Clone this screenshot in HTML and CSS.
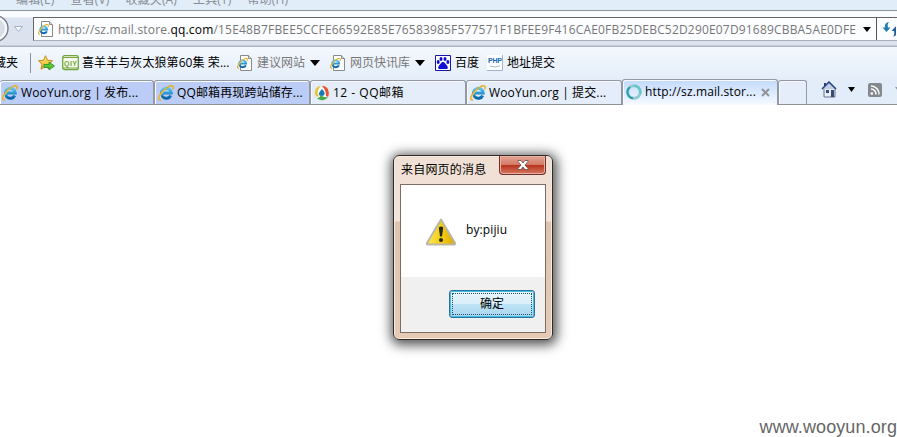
FILE: index.html
```html
<!DOCTYPE html>
<html lang="zh-CN">
<head>
<meta charset="utf-8">
<title>QQ邮箱</title>
<link rel="stylesheet" href="styles.css">
</head>
<body>
<svg class="defs" width="0" height="0" aria-hidden="true">
  <defs>
    <linearGradient id="blue" x2="0" y2="1"><stop stop-color="#54c6f4"/><stop offset="1" stop-color="#0863ad"/></linearGradient>
    <linearGradient id="gold" x2="0" y2="1"><stop stop-color="#fff27b"/><stop offset="1" stop-color="#e7aa16"/></linearGradient>
    <linearGradient id="warn" x2="1" y2="0"><stop stop-color="#ffe65a"/><stop offset=".5" stop-color="#f5cf12"/><stop offset="1" stop-color="#dda900"/></linearGradient>
    <symbol id="ie" viewBox="0 0 16 16">
      <path d="M12.8 10.5A5 5 0 1 1 13.3 8H5" fill="none" stroke="url(#blue)" stroke-width="2.9"/>
      <path d="M3 14.8C-.5 15.5.3 11 4.2 6.8 8.2 2.4 13-.3 14.7 1.2c.8.8.4 2.1-.2 3.2" fill="none" stroke="#e8ad22" stroke-width="1.5"/>
      <path d="M2.5 14C1 12.8 3 9 6.5 5.6" fill="none" stroke="#ffe36a" stroke-width=".7"/>
    </symbol>
    <symbol id="iepage" viewBox="0 0 16 16">
      <path d="M3.5.5h8l3 3v12h-11z" fill="#fff" stroke="#8a8a8a"/>
      <path d="M11.5.5v3h3" fill="#ddd" stroke="#8a8a8a"/>
      <use href="#ie" x="0" y="3" width="11" height="11"/>
    </symbol>
  </defs>
</svg>

<header class="chrome">
  <nav class="menu"><span>编辑(E)</span><span>查看(V)</span><span>收藏夹(A)</span><span>工具(T)</span><span>帮助(H)</span></nav>

  <div class="navrow">
    <svg class="back" width="33" height="28" viewBox="0 0 33 28">
      <circle cx="-5" cy="12.5" r="13" fill="#d8dee7" stroke="#737b87" stroke-width="1.3"/>
      <circle cx="-5" cy="12.5" r="11" fill="none" stroke="#f8fafc" stroke-width="2"/>
      <path d="M14.5 10.5h8l-4 5z" fill="#f5f7fc" stroke="#a9b1c4"/>
    </svg>
    <div class="address">
      <svg width="16" height="16"><use href="#iepage"/></svg>
      <span class="url">http://sz.mail.store.<b>qq.com</b>/15E48B7FBEE5CCFE66592E85E76583985F577571F1BFEE9F416CAE0FB25DEBC52D290E07D91689CBBA5AE0DFE</span>
      <svg class="drop" width="8" height="5"><path d="M0 0h8L4 5z"/></svg>
      <span class="refresh"><svg width="18" height="16" viewBox="0 0 18 16"><path d="M7 1C3.500 1.500 2.500 4 3 6.500H.5l4 4.500 4-4.500H6C5.500 4.500 5.500 2.500 7 1z" fill="#257fae"/><path d="M11 15.500c3.500-.5 4.500-3 4-5.500h2.500l-4-4.500-4 4.500H12c.5 2 .5 4-1 5.500z" fill="#275ba0"/></svg></span>
    </div>
  </div>

  <div class="favorites">
    <span class="label cut"><i>收藏夹</i></span>
    <span class="divider"></span>
    <svg class="star" width="17" height="16" viewBox="0 0 17 16"><path d="M7.500.7l2 4.600 5 .5-3.700 3.400 1.100 5-4.400-2.600-4.500 2.600L4 9.200.5 5.800l5-.5z" fill="url(#gold)" stroke="#c78b19"/><path d="M6 9.500h5V7l5.500 4-5.500 4v-2.500H6z" fill="#58c936" stroke="#238e27" stroke-width=".8"/></svg>
    <a class="fav qiyi"><svg width="17" height="16" viewBox="0 0 17 16"><rect x=".7" y=".7" width="15.600" height="14" rx="2" fill="#f5faec" stroke="#70a63b" stroke-width="1.300"/><path d="M1 2.500h15M1 13h15" stroke="#70a63b"/><text x="2" y="11" class="qiytext" textLength="13">QIY</text></svg><span>喜羊羊与灰太狼第60集 荣...</span></a>
    <a class="fav suggest muted"><svg width="16" height="16"><use href="#iepage"/></svg><span>建议网站</span><svg class="arrow" width="10" height="6"><path d="M0 0h10L5 6z"/></svg></a>
    <a class="fav feeds muted"><svg width="16" height="16"><use href="#iepage"/></svg><span>网页快讯库</span><svg class="arrow" width="10" height="6"><path d="M0 0h10L5 6z"/></svg></a>
    <a class="fav baidu"><svg width="16" height="16" viewBox="0 0 16 16"><path d="M.5.500h15v15H.5z" fill="#fff" stroke="#1717ae"/><g fill="#1010d2"><ellipse cx="3.200" cy="7" rx="1.500" ry="2"/><ellipse cx="6" cy="4" rx="1.500" ry="2"/><ellipse cx="10" cy="4" rx="1.500" ry="2"/><ellipse cx="12.900" cy="7" rx="1.500" ry="2"/><path d="M8 7c2 0 2 2 4 3.500 2 3 0 4-2 3.500H6c-2 .5-4-.5-2-3.500C6 9 6 7 8 7z"/></g></svg><span>百度</span></a>
    <a class="fav php"><svg width="16" height="16" viewBox="0 0 16 16"><path d="M0 0h16v16H0z" fill="#fff"/><path d="M15.500 0v15.500H0" fill="none" stroke="#9eb5d1"/><text x="1" y="7.500" class="phptext" textLength="14">PHP</text><path d="M3 11q5 2 10 0" fill="none" stroke="#a5bdd7"/></svg><span>地址提交</span></a>
  </div>

  <div class="tabs">
    <div class="tab blue first"><svg width="16" height="16"><use href="#ie"/></svg><span>WooYun.org | 发布...</span></div>
    <div class="tab blue second"><svg width="16" height="16"><use href="#ie"/></svg><span>QQ邮箱再现跨站储存...</span></div>
    <div class="tab third"><svg width="16" height="16" viewBox="0 0 16 16"><circle cx="8" cy="8" r="7.500" fill="#fff" stroke="#dce3e8"/><path d="M7 1C2 1-.5 7 2 11c1 1 2 1 3 0C2 8 4 4 7 1z" fill="#e8c331"/><path d="M8 1c5-1 8 5 6.500 10-.5 1-1.500 1-2.500 0 0-4-1-7-4-10z" fill="#e85331"/><path d="M3 13c3 3 8 3 11-1-4 1-6-1-7-2-1 2-2 3-4 3z" fill="#44ac42"/><path d="M8 4q4 4 2 6-2 2-5 0-1-2 3-6z" fill="#147cb8"/></svg><span>12 - QQ邮箱</span></div>
    <div class="tab fourth"><svg width="16" height="16"><use href="#ie"/></svg><span>WooYun.org | 提交...</span></div>
    <div class="tab active"><svg width="16" height="16" viewBox="0 0 16 16"><circle cx="8" cy="8" r="6.300" fill="none" stroke="#91cbd2" stroke-width="3"/><path d="M4 3a6.300 6.300 0 0 0 3 11.300" fill="none" stroke="#299eaa" stroke-width="2"/><path d="M8 1.700A6.300 6.300 0 0 1 14 10" fill="none" stroke="#5fc8c5" stroke-width="2"/></svg><span>http://sz.mail.stor...</span><svg class="close" width="9" height="9"><path d="M1 1l7 7M8 1L1 8" stroke="#909499" stroke-width="2"/></svg></div>
    <div class="tab newtab"></div>
    <div class="tools">
      <svg width="17" height="17" viewBox="0 0 17 17"><path d="M3 7h11v9H3z" fill="#e9edf4" stroke="#637291"/><path d="M1 8l7-7 7 7" fill="#c1cde3" stroke="#273f86" stroke-width="1.500"/><path d="M3 2h2v3H3z" fill="#293f82"/><path d="M5 9h3v3H5zM10 9h3v7h-3z" fill="#344975"/></svg>
      <svg class="drop home-drop" width="7" height="5"><path d="M0 0h7L3.500 5z"/></svg>
      <svg class="rss" width="14" height="14" viewBox="0 0 14 14"><rect width="14" height="14" rx="2" fill="#85898d"/><circle cx="3.800" cy="10.500" r="1.300" fill="#fff"/><path d="M3 6a5 5 0 0 1 5 5.500M3 3a8 8 0 0 1 8 8.500" fill="none" stroke="#fff" stroke-width="1.500"/></svg>
      <svg class="drop last-drop" width="7" height="5"><path d="M0 0h7L3.500 5z" fill="#919ba9"/></svg>
    </div>
  </div>
</header>

<main class="page">
  <section class="dialog">
    <header class="title"><span>来自网页的消息</span><button class="x" aria-label="关闭"><svg width="12" height="10" viewBox="0 0 12 10"><path d="M1 .5h3L6 3 8 .5h3v1L8 5l3 3.500v1H8L6 7 4 9.500H1v-1L4 5 1 1.500z" fill="#fff" stroke="#66494a" stroke-width=".8"/></svg></button></header>
    <div class="content">
      <div class="message"><svg width="32" height="28" viewBox="0 0 32 28"><path d="M16 1.500L30 25q.5 1.500-1 1.500H3q-1.500 0-1-1.500z" fill="url(#warn)" stroke="#bbb6aa" stroke-width="2" stroke-linejoin="round"/><path d="M13.800 9.500q2.200-2 4.400 0L17 18.500h-2z" fill="#252813"/><circle cx="16" cy="22" r="2" fill="#252813"/></svg><span>by:pijiu</span></div>
      <div class="actions"><button class="ok">确定</button></div>
    </div>
  </section>
  <footer class="watermark">www.wooyun.org</footer>
</main>
</body>
</html>
```

FILE: styles.css
```css
* { box-sizing: border-box; }
body { margin: 0; width: 897px; height: 437px; overflow: hidden; display: flex; flex-direction: column; background: #fff; color: #000; font: 12px/16px "Open Sans", "Noto Sans CJK SC", sans-serif; }
svg { display: block; flex: none; }
.defs { position: absolute; }
span, a { white-space: nowrap; }
.chrome { height: 105px; flex: none; background: #e3edf9; }
.menu { height: 11px; display: flex; gap: 16px; padding-left: 16px; border-bottom: 1px solid #8d939d; color: #888d94; line-height: 0; letter-spacing: .15px; overflow: hidden; background: #e2edfa; }
.navrow { height: 36px; display: flex; padding-top: 6px; background: linear-gradient(#f9fbfe 0 6px, #dce4f1 7px, #dce2ee 34px, #adb6c6 35px); }
.back { margin-top: -1px; }
.address { flex: 1; display: flex; align-items: center; height: 24px; padding-left: 4px; border: 1px solid #666; border-right: 0; border-bottom-color: #a8afbb; background: #fcfdff; }
.url { width: 800px; margin-left: 4px; padding-top: 1px; color: #777; letter-spacing: .18px; }
.url b { color: #000; font-weight: 400; }
.drop { margin-left: 5px; }
.refresh { margin-left: 5px; height: 22px; padding: 3px 0 0 5px; border-left: 1px solid #555; width: 20px; overflow: hidden; }
.favorites { height: 32px; display: flex; align-items: center; background: linear-gradient(#f4f8fe, #e4eefa); }
.cut { width: 18px; overflow: hidden; display: flex; justify-content: flex-end; }
.cut i { font-style: normal; }
.divider { height: 20px; border-left: 1px solid #8c9299; margin-left: 12px; }
.star { margin-left: 7px; }
.fav { display: flex; align-items: center; }
.fav > span { margin-left: 4px; }
.qiyi { margin-left: 7px; width: 175px; }
.qiyi > span { margin-left: 3px; letter-spacing: .08px; }
.suggest { width: 93px; }
.feeds { width: 105px; }
.baidu { width: 52px; }
.muted { color: #777; }
.arrow { margin-left: 5px; }
.qiytext { font: bold 7px "Liberation Sans", sans-serif; fill: #70a63b; }
.phptext { font: bold 7px "Liberation Sans", sans-serif; fill: #1469ae; }
.tabs { height: 26px; display: flex; align-items: flex-end; border-bottom: 1px solid #8d9298; background: #e3edf9; }
.tab { height: 24px; display: flex; align-items: center; border: 1px solid #9299a3; border-bottom: 0; border-radius: 3px 3px 0 0; background: #e4edf9; box-shadow: inset 1px 1px #f8faff; flex: none; padding-left: 3px; }
.tab > span { margin-left: 3px; letter-spacing: .12px; }
.blue { background: #bbcdf6; }
.first { width: 154px; border-left: 0; padding-left: 2px; }
.second { width: 156px; }
.third { width: 156px; }
.third > span { letter-spacing: .5px; }
.fourth { width: 156px; }
.active { width: 156px; height: 26px; margin-bottom: -1px; padding-bottom: 1px; background: linear-gradient(#c1dafb, #f7faff); }
.close { margin-left: 5px; }
.newtab { width: 29px; }
.tools { display: flex; height: 24px; align-items: center; margin-left: 14px; padding-bottom: 5px; }
.tools .home-drop { margin-left: 10px; }
.rss { margin-left: 13px; }
.last-drop { margin-left: 13px; }
.page { flex: 1; display: flex; flex-direction: column; align-items: flex-start; padding: 50px 0 0 393px; }
.dialog { width: 160px; height: 185px; padding: 0 6px 6px; border: 1px solid #332d29; border-radius: 6px; background: linear-gradient(#efdfd4, #f2e3da 65px, #dfc5b1 66px, #e5cab6); box-shadow: inset 0 0 0 1px #f8e9df, 1px 2px 12px 3px rgba(0,0,0,.68); }
.title { height: 28px; display: flex; justify-content: space-between; align-items: flex-start; }
.title span { line-height: 28px; margin-left: 1px; letter-spacing: .2px; }
.x { width: 47px; height: 19px; padding: 0; display: grid; place-items: center; border: 1px solid #6e302c; border-top: 0; border-radius: 0 0 4px 4px; background: linear-gradient(#e3a595, #d47b66 48%, #b8351d 52%, #d67861); box-shadow: inset 0 0 0 1px #eab1a3; }
.content { height: 149px; border: 1px solid #7b6b61; display: flex; flex-direction: column; background: #fff; }
.message { flex: 1; display: flex; align-items: center; padding: 2px 0 0 24px; }
.message span { margin-left: 9px; margin-top: -5px; letter-spacing: .1px; }
.actions { height: 55px; background: #f0f0f0; display: flex; justify-content: flex-end; padding: 13px 10px 0 0; }
.ok { width: 86px; height: 28px; padding: 0; border: 1px solid #2c739e; border-radius: 3px; background: linear-gradient(#e9f5fc, #d9effa 48%, #bee3f6 50%, #a9d6ef); box-shadow: inset 0 0 0 1px #45bee5; outline: 1px dotted #234d65; outline-offset: -4px; font: inherit; color: #000; }
.watermark { margin: auto 0 0 auto; font: 18px/19px "Liberation Sans", sans-serif; letter-spacing: .1px; color: #666; }
```
